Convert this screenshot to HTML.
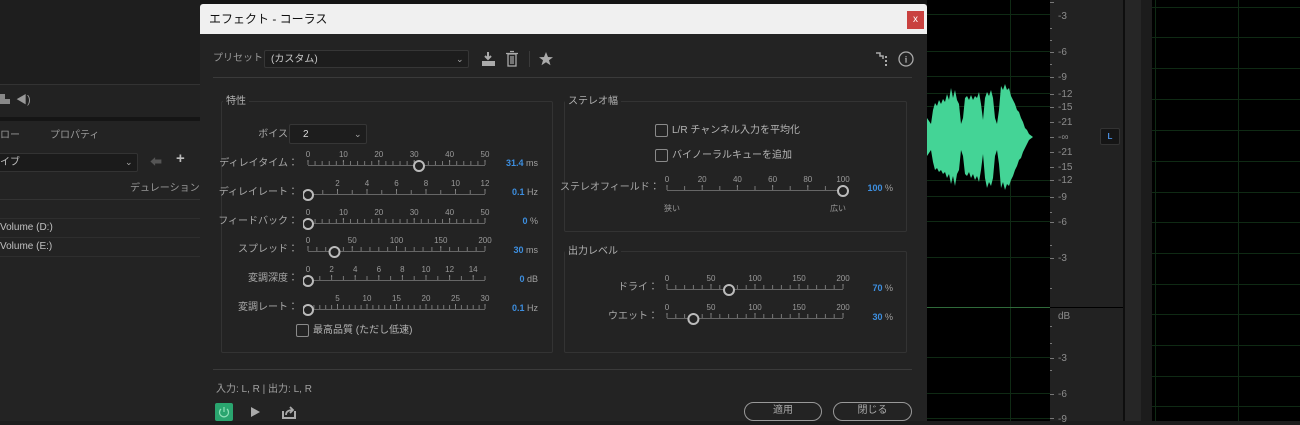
<!DOCTYPE html>
<html><head><meta charset="utf-8"><style>
*{margin:0;padding:0;box-sizing:border-box}
body{width:1300px;height:421px;overflow:hidden;background:#1d1d1d;font-family:"Liberation Sans","Noto Sans CJK JP",sans-serif;position:relative;color:#b8b8b8}
.a{position:absolute}
.t{position:absolute;font-size:10px;color:#b5b5b5;white-space:nowrap;line-height:12px}
.lbl{position:absolute;font-size:10px;color:#a8a8a8;text-align:right;white-space:nowrap;line-height:12px}
.val{position:absolute;font-size:9px;color:#a0a0a0;text-align:right;white-space:nowrap;line-height:12px}
.val b{color:#3d8fe0;font-weight:bold}
.cb{position:absolute;width:13px;height:13px;border:1.5px solid #8a8a8a;border-radius:2px}
.grp{position:absolute;border:1px solid #333;border-radius:2px}
.gl{position:absolute;font-size:10px;color:#b0b0b0;background:#232323;padding:0 3px;line-height:12px}
svg text{font-family:"Liberation Sans",sans-serif;font-size:8px;fill:#9a9a9a;text-anchor:middle}
.rl{position:absolute;left:1058px;font-size:10px;color:#8c8c8c;line-height:10px}
</style></head><body>
<!-- left panel -->
<div class="a" style="left:0;top:0;width:200px;height:84px;background:#1e1e1e"></div>
<div class="a" style="left:0;top:84px;width:200px;height:1px;background:#333"></div>
<div class="a" style="left:0;top:85px;width:200px;height:32px;background:#222"></div>
<div class="t" style="left:0;top:95px;color:#888">▙</div>
<div class="t" style="left:16px;top:94px;color:#999;font-size:11px">◀)</div>
<div class="a" style="left:0;top:117px;width:200px;height:4px;background:#151515"></div>
<div class="a" style="left:0;top:121px;width:200px;height:300px;background:#232323"></div>
<div class="t" style="left:0;top:130px;color:#999">ロー</div>
<div class="t" style="left:50px;top:130px;color:#999">プロパティ</div>
<div class="a" style="left:-2px;top:153px;width:140px;height:19px;background:#1b1b1b;border:1px solid #333;border-radius:2px"></div>
<div class="t" style="left:0;top:157px;color:#c0c0c0">イブ</div>
<div class="t" style="left:125px;top:156px;color:#aaa;font-size:9px">⌄</div>
<div class="t" style="left:150px;top:156px;color:#555;font-size:12px">⬅</div>
<div class="t" style="left:176px;top:153px;color:#bbb;font-size:15px;font-weight:bold">+</div>
<div class="t" style="left:130px;top:183px;color:#999">デュレーション</div>
<div class="a" style="left:0;top:199px;width:200px;height:1px;background:#333"></div>
<div class="a" style="left:0;top:218px;width:200px;height:1px;background:#2e2e2e"></div>
<div class="a" style="left:0;top:237px;width:200px;height:1px;background:#2e2e2e"></div>
<div class="a" style="left:0;top:256px;width:200px;height:1px;background:#2e2e2e"></div>
<div class="t" style="left:0;top:222px;color:#c0c0c0">Volume (D:)</div>
<div class="t" style="left:0;top:241px;color:#c0c0c0">Volume (E:)</div>

<!-- waveform area -->
<div class="a" style="left:927px;top:0;width:123px;height:421px;background:#000"></div>
<svg class="a" style="left:927px;top:0" width="123" height="421">
<g stroke="#0f2a14" stroke-width="1">
<line x1="0" y1="14.5" x2="123" y2="14.5"/><line x1="0" y1="51.5" x2="123" y2="51.5"/><line x1="0" y1="76.5" x2="123" y2="76.5"/><line x1="0" y1="93.5" x2="123" y2="93.5"/><line x1="0" y1="106.5" x2="123" y2="106.5"/><line x1="0" y1="180.5" x2="123" y2="180.5"/><line x1="0" y1="196.5" x2="123" y2="196.5"/><line x1="0" y1="221.5" x2="123" y2="221.5"/><line x1="0" y1="257.5" x2="123" y2="257.5"/><line x1="0" y1="357.5" x2="123" y2="357.5"/><line x1="0" y1="393.5" x2="123" y2="393.5"/><line x1="0" y1="418.5" x2="123" y2="418.5"/>
<line x1="83.5" y1="0" x2="83.5" y2="421"/></g>
<line x1="0" y1="307.5" x2="123" y2="307.5" stroke="#2f6a3a" stroke-width="1"/>
<path fill="#44d496" d="M0,118 L4,124 L6,110 L8,103 L10,106 L12,100 L14,104 L16,99 L18,102 L20,94 L22,100 L24,88 L26,98 L28,90 L30,100 L32,104 L34,124 L36,118 L38,98 L40,96 L42,100 L44,95 L46,100 L48,96 L50,98 L52,92 L54,104 L56,120 L58,98 L60,92 L62,96 L64,90 L66,98 L68,118 L70,124 L72,110 L74,86 L76,90 L78,84 L80,90 L82,88 L84,96 L86,100 L88,104 L90,110 L92,112 L94,118 L96,122 L98,128 L100,130 L102,134 L106,137 L102,140 L100,144 L98,148 L96,152 L94,158 L92,160 L90,166 L88,170 L86,176 L84,180 L82,186 L80,184 L78,190 L76,182 L74,188 L72,164 L70,150 L68,156 L66,178 L64,186 L62,182 L60,188 L58,178 L56,154 L54,170 L52,182 L50,176 L48,180 L46,174 L44,178 L42,172 L40,176 L38,174 L36,156 L34,150 L32,170 L30,174 L28,186 L26,176 L24,184 L22,174 L20,178 L18,172 L16,174 L14,170 L12,172 L10,168 L8,170 L6,162 L4,150 L0,156 Z"/>
</svg>
<!-- ruler -->
<div class="a" style="left:1050px;top:0;width:73px;height:421px;background:#222"></div>
<svg class="a" style="left:1050px;top:0" width="6" height="421"><g stroke="#777"><line x1="0" y1="2.5" x2="4" y2="2.5"/><line x1="0" y1="28.5" x2="2" y2="28.5"/><line x1="0" y1="40.5" x2="2" y2="40.5"/><line x1="0" y1="52.5" x2="4" y2="52.5"/><line x1="0" y1="64.5" x2="2" y2="64.5"/><line x1="0" y1="77.5" x2="4" y2="77.5"/><line x1="0" y1="94.5" x2="4" y2="94.5"/><line x1="0" y1="107.5" x2="4" y2="107.5"/><line x1="0" y1="122.5" x2="4" y2="122.5"/><line x1="0" y1="137.5" x2="4" y2="137.5"/><line x1="0" y1="152.5" x2="4" y2="152.5"/><line x1="0" y1="167.5" x2="4" y2="167.5"/><line x1="0" y1="180.5" x2="4" y2="180.5"/><line x1="0" y1="197.5" x2="4" y2="197.5"/><line x1="0" y1="212.5" x2="2" y2="212.5"/><line x1="0" y1="222.5" x2="4" y2="222.5"/><line x1="0" y1="245.5" x2="2" y2="245.5"/><line x1="0" y1="258.5" x2="4" y2="258.5"/><line x1="0" y1="288.5" x2="2" y2="288.5"/><line x1="0" y1="326.5" x2="2" y2="326.5"/><line x1="0" y1="343.5" x2="2" y2="343.5"/><line x1="0" y1="358.5" x2="4" y2="358.5"/><line x1="0" y1="370.5" x2="2" y2="370.5"/><line x1="0" y1="394.5" x2="4" y2="394.5"/><line x1="0" y1="418.5" x2="4" y2="418.5"/></g></svg>
<div class="a" style="left:1050px;top:307px;width:73px;height:1px;background:#000"></div>
<div class="a" style="left:1123px;top:0;width:2px;height:421px;background:#0e0e0e"></div>
<div class="a" style="left:1125px;top:0;width:27px;height:421px;background:#262626"></div>
<div class="a" style="left:1141px;top:0;width:11px;height:421px;background:#1c1c1c"></div>
<div class="rl" style="top:12px">-3</div><div class="rl" style="top:48px">-6</div><div class="rl" style="top:73px">-9</div><div class="rl" style="top:90px">-12</div><div class="rl" style="top:103px">-15</div><div class="rl" style="top:118px">-21</div><div class="rl" style="top:133px">-∞</div><div class="rl" style="top:148px">-21</div><div class="rl" style="top:163px">-15</div><div class="rl" style="top:176px">-12</div><div class="rl" style="top:193px">-9</div><div class="rl" style="top:218px">-6</div><div class="rl" style="top:254px">-3</div><div class="rl" style="top:312px">dB</div><div class="rl" style="top:354px">-3</div><div class="rl" style="top:390px">-6</div><div class="rl" style="top:415px">-9</div>
<div class="a" style="left:1100px;top:128px;width:20px;height:17px;background:#151515;border:1px solid #333;border-radius:2px;color:#4a8fe0;font-size:8px;text-align:center;line-height:15px;font-weight:bold">L</div>
<!-- far right grid -->
<svg class="a" style="left:1152px;top:0" width="148" height="421"><rect width="148" height="421" fill="#000"/>
<g stroke="#0f2a14"><line x1="3.5" y1="0" x2="3.5" y2="421"/><line x1="86.5" y1="0" x2="86.5" y2="421"/>
<line x1="0" y1="7.5" x2="148" y2="7.5"/><line x1="0" y1="37.5" x2="148" y2="37.5"/><line x1="0" y1="68.5" x2="148" y2="68.5"/><line x1="0" y1="99.5" x2="148" y2="99.5"/><line x1="0" y1="130.5" x2="148" y2="130.5"/><line x1="0" y1="161.5" x2="148" y2="161.5"/><line x1="0" y1="192.5" x2="148" y2="192.5"/><line x1="0" y1="222.5" x2="148" y2="222.5"/><line x1="0" y1="253.5" x2="148" y2="253.5"/><line x1="0" y1="284.5" x2="148" y2="284.5"/><line x1="0" y1="314.5" x2="148" y2="314.5"/><line x1="0" y1="345.5" x2="148" y2="345.5"/><line x1="0" y1="376.5" x2="148" y2="376.5"/><line x1="0" y1="406.5" x2="148" y2="406.5"/></g></svg>

<!-- dialog -->
<div class="a" style="left:200px;top:0;width:727px;height:4px;background:#141414"></div>
<div class="a" style="left:200px;top:4px;width:727px;height:30px;background:#f0f0f0;border-radius:3px 3px 0 0"></div>
<div class="t" style="left:209px;top:12px;color:#111;font-size:12px;line-height:14px">エフェクト - コーラス</div>
<div class="a" style="left:907px;top:11px;width:17px;height:18px;background:#c9413f;color:#fff;font-size:10px;text-align:center;line-height:17px">x</div>
<div class="a" style="left:200px;top:34px;width:727px;height:387px;background:#232323"></div>

<div class="lbl" style="left:213px;top:53px;color:#999">プリセット：</div>
<div class="a" style="left:264px;top:50px;width:205px;height:18px;background:#1d1d1d;border:1px solid #363636;border-radius:2px"></div>
<div class="t" style="left:271px;top:54px;color:#c8c8c8">(カスタム)</div>
<div class="t" style="left:456px;top:53px;color:#aaa;font-size:9px">⌄</div>
<svg class="a" style="left:481px;top:50px" width="75" height="18">
<path d="M7,2 v7 M4,6 l3,3 3,-3" stroke="#aaa" stroke-width="2" fill="none"/><rect x="1" y="11" width="13" height="5" fill="#aaa"/>
<rect x="27" y="4" width="8" height="12" stroke="#aaa" fill="none" stroke-width="1.3"/><path d="M25,3.5 h12 M29,1.5 h4 M30,6 v8 M32,6 v8" stroke="#aaa" stroke-width="1.2"/>
<line x1="48.5" y1="1" x2="48.5" y2="17" stroke="#3a3a3a"/>
<path d="M65,2 l2,5 5,0.3 -4,3 1.5,5 -4.5,-3 -4.5,3 1.5,-5 -4,-3 5,-0.3z" fill="#aaa"/></svg>
<svg class="a" style="left:875px;top:50px" width="40" height="18">
<path d="M1,3 h4 v3 h3 v3" stroke="#aaa" stroke-width="1.5" fill="none"/><rect x="10" y="6" width="2" height="2" fill="#aaa"/><rect x="10" y="10" width="2" height="2" fill="#aaa"/><rect x="10" y="14" width="2" height="2" fill="#aaa"/>
<circle cx="31" cy="9" r="7" stroke="#aaa" stroke-width="1.3" fill="none"/><text x="31" y="12.5" style="font-size:9px;fill:#aaa;font-weight:bold;font-family:'Liberation Serif',serif">i</text></svg>
<div class="a" style="left:213px;top:77px;width:699px;height:1px;background:#3a3a3a"></div>

<!-- groups -->
<div class="grp" style="left:221px;top:101px;width:332px;height:252px"></div><div class="gl" style="left:223px;top:96px">特性</div>
<div class="grp" style="left:564px;top:101px;width:343px;height:131px"></div><div class="gl" style="left:565px;top:96px">ステレオ幅</div>
<div class="grp" style="left:564px;top:251px;width:343px;height:102px"></div><div class="gl" style="left:565px;top:246px">出力レベル</div>

<div class="lbl" style="left:230px;top:129px;width:68px">ボイス：</div>
<div class="a" style="left:289px;top:124px;width:78px;height:20px;background:#1d1d1d;border:1px solid #363636;border-radius:2px"></div>
<div class="t" style="left:303px;top:129px;color:#ddd">2</div>
<div class="t" style="left:354px;top:128px;color:#aaa;font-size:9px">⌄</div>

<!-- sliders left -->
<div class="lbl" style="left:200px;top:158px;width:98px">ディレイタイム：</div>
<svg class="a" style="left:303px;top:145px" width="190" height="30"><text x="5" y="12">0</text><text x="40.4" y="12">10</text><text x="75.8" y="12">20</text><text x="111.2" y="12">30</text><text x="146.6" y="12">40</text><text x="182" y="12">50</text>
<line x1="5" y1="20.5" x2="182" y2="20.5" stroke="#666"/><line x1="5" y1="18" x2="183" y2="18" stroke="#777" stroke-width="4" stroke-dasharray="1 6.08" transform="translate(-0.5,0)"/><line x1="5" y1="16" x2="183" y2="16" stroke="#888" stroke-width="2" stroke-dasharray="1 34.4" transform="translate(-0.5,0)"/>
<circle cx="116" cy="21" r="5" fill="#232323" stroke="#bbb" stroke-width="2"/></svg>
<div class="val" style="left:480px;top:157px;width:58px"><b>31.4</b> ms</div>

<div class="lbl" style="left:200px;top:187px;width:98px">ディレイレート：</div>
<svg class="a" style="left:303px;top:174px" width="190" height="30"><text x="34.5" y="12">2</text><text x="64" y="12">4</text><text x="93.5" y="12">6</text><text x="123" y="12">8</text><text x="152.5" y="12">10</text><text x="182" y="12">12</text>
<line x1="5" y1="20.5" x2="182" y2="20.5" stroke="#666"/><line x1="5" y1="18" x2="183" y2="18" stroke="#777" stroke-width="4" stroke-dasharray="1 13.75" transform="translate(-0.5,0)"/><line x1="5" y1="16" x2="183" y2="16" stroke="#888" stroke-width="2" stroke-dasharray="1 28.5" transform="translate(-0.5,0)"/>
<circle cx="5" cy="21" r="5" fill="#232323" stroke="#bbb" stroke-width="2"/></svg>
<div class="val" style="left:480px;top:186px;width:58px"><b>0.1</b> Hz</div>

<div class="lbl" style="left:200px;top:216px;width:98px">フィードバック：</div>
<svg class="a" style="left:303px;top:203px" width="190" height="30"><text x="5" y="12">0</text><text x="40.4" y="12">10</text><text x="75.8" y="12">20</text><text x="111.2" y="12">30</text><text x="146.6" y="12">40</text><text x="182" y="12">50</text>
<line x1="5" y1="20.5" x2="182" y2="20.5" stroke="#666"/><line x1="5" y1="18" x2="183" y2="18" stroke="#777" stroke-width="4" stroke-dasharray="1 6.08" transform="translate(-0.5,0)"/><line x1="5" y1="16" x2="183" y2="16" stroke="#888" stroke-width="2" stroke-dasharray="1 34.4" transform="translate(-0.5,0)"/>
<circle cx="5" cy="21" r="5" fill="#232323" stroke="#bbb" stroke-width="2"/></svg>
<div class="val" style="left:480px;top:215px;width:58px"><b>0</b> %</div>

<div class="lbl" style="left:200px;top:244px;width:98px">スプレッド：</div>
<svg class="a" style="left:303px;top:231px" width="190" height="30"><text x="5" y="12">0</text><text x="49.25" y="12">50</text><text x="93.5" y="12">100</text><text x="137.75" y="12">150</text><text x="182" y="12">200</text>
<line x1="5" y1="20.5" x2="182" y2="20.5" stroke="#666"/><line x1="5" y1="18" x2="183" y2="18" stroke="#777" stroke-width="4" stroke-dasharray="1 7.85" transform="translate(-0.5,0)"/><line x1="5" y1="16" x2="183" y2="16" stroke="#888" stroke-width="2" stroke-dasharray="1 43.25" transform="translate(-0.5,0)"/>
<circle cx="31.5" cy="21" r="5" fill="#232323" stroke="#bbb" stroke-width="2"/></svg>
<div class="val" style="left:480px;top:244px;width:58px"><b>30</b> ms</div>

<div class="lbl" style="left:200px;top:273px;width:98px">変調深度：</div>
<svg class="a" style="left:303px;top:260px" width="190" height="30"><text x="5" y="12">0</text><text x="28.6" y="12">2</text><text x="52.2" y="12">4</text><text x="75.8" y="12">6</text><text x="99.4" y="12">8</text><text x="123" y="12">10</text><text x="146.6" y="12">12</text><text x="170.2" y="12">14</text>
<line x1="5" y1="20.5" x2="182" y2="20.5" stroke="#666"/><line x1="5" y1="18" x2="183" y2="18" stroke="#777" stroke-width="4" stroke-dasharray="1 10.8" transform="translate(-0.5,0)"/><line x1="5" y1="16" x2="172" y2="16" stroke="#888" stroke-width="2" stroke-dasharray="1 22.6" transform="translate(-0.5,0)"/>
<circle cx="5" cy="21" r="5" fill="#232323" stroke="#bbb" stroke-width="2"/></svg>
<div class="val" style="left:480px;top:273px;width:58px"><b>0</b> dB</div>

<div class="lbl" style="left:200px;top:302px;width:98px">変調レート：</div>
<svg class="a" style="left:303px;top:289px" width="190" height="30"><text x="34.5" y="12">5</text><text x="64" y="12">10</text><text x="93.5" y="12">15</text><text x="123" y="12">20</text><text x="152.5" y="12">25</text><text x="182" y="12">30</text>
<line x1="5" y1="20.5" x2="182" y2="20.5" stroke="#666"/><line x1="5" y1="18" x2="183" y2="18" stroke="#777" stroke-width="4" stroke-dasharray="1 4.9" transform="translate(-0.5,0)"/><line x1="5" y1="16" x2="183" y2="16" stroke="#888" stroke-width="2" stroke-dasharray="1 28.5" transform="translate(-0.5,0)"/>
<circle cx="5" cy="21" r="5" fill="#232323" stroke="#bbb" stroke-width="2"/></svg>
<div class="val" style="left:480px;top:302px;width:58px"><b>0.1</b> Hz</div>

<div class="cb" style="left:296px;top:324px"></div>
<div class="t" style="left:313px;top:325px;color:#b5b5b5">最高品質 (ただし低速)</div>

<!-- stereo -->
<div class="cb" style="left:655px;top:124px"></div><div class="t" style="left:672px;top:125px">L/R チャンネル入力を平均化</div>
<div class="cb" style="left:655px;top:149px"></div><div class="t" style="left:672px;top:150px">バイノーラルキューを追加</div>
<div class="lbl" style="left:560px;top:182px;width:98px">ステレオフィールド：</div>
<svg class="a" style="left:662px;top:170px" width="190" height="30"><text x="5" y="12">0</text><text x="40.2" y="12">20</text><text x="75.4" y="12">40</text><text x="110.6" y="12">60</text><text x="145.8" y="12">80</text><text x="181" y="12">100</text>
<line x1="5" y1="20.5" x2="181" y2="20.5" stroke="#666"/><line x1="5" y1="18" x2="182" y2="18" stroke="#777" stroke-width="4" stroke-dasharray="1 16.6" transform="translate(-0.5,0)"/><line x1="5" y1="16" x2="182" y2="16" stroke="#888" stroke-width="2" stroke-dasharray="1 34.2" transform="translate(-0.5,0)"/>
<circle cx="181" cy="21" r="5" fill="#232323" stroke="#bbb" stroke-width="2"/></svg>
<div class="val" style="left:835px;top:182px;width:58px"><b>100</b> %</div>
<div class="t" style="left:664px;top:203px;font-size:8px;color:#999">狭い</div>
<div class="t" style="left:830px;top:203px;font-size:8px;color:#999">広い</div>

<!-- output -->
<div class="lbl" style="left:560px;top:282px;width:98px">ドライ：</div>
<svg class="a" style="left:662px;top:269px" width="190" height="30"><text x="5" y="12">0</text><text x="49" y="12">50</text><text x="93" y="12">100</text><text x="137" y="12">150</text><text x="181" y="12">200</text>
<line x1="5" y1="20.5" x2="181" y2="20.5" stroke="#666"/><line x1="5" y1="18" x2="182" y2="18" stroke="#777" stroke-width="4" stroke-dasharray="1 7.8" transform="translate(-0.5,0)"/><line x1="5" y1="16" x2="182" y2="16" stroke="#888" stroke-width="2" stroke-dasharray="1 43" transform="translate(-0.5,0)"/>
<circle cx="67" cy="21" r="5" fill="#232323" stroke="#bbb" stroke-width="2"/></svg>
<div class="val" style="left:835px;top:282px;width:58px"><b>70</b> %</div>
<div class="lbl" style="left:560px;top:311px;width:98px">ウエット：</div>
<svg class="a" style="left:662px;top:298px" width="190" height="30"><text x="5" y="12">0</text><text x="49" y="12">50</text><text x="93" y="12">100</text><text x="137" y="12">150</text><text x="181" y="12">200</text>
<line x1="5" y1="20.5" x2="181" y2="20.5" stroke="#666"/><line x1="5" y1="18" x2="182" y2="18" stroke="#777" stroke-width="4" stroke-dasharray="1 7.8" transform="translate(-0.5,0)"/><line x1="5" y1="16" x2="182" y2="16" stroke="#888" stroke-width="2" stroke-dasharray="1 43" transform="translate(-0.5,0)"/>
<circle cx="31.4" cy="21" r="5" fill="#232323" stroke="#bbb" stroke-width="2"/></svg>
<div class="val" style="left:835px;top:311px;width:58px"><b>30</b> %</div>

<!-- footer -->
<div class="a" style="left:213px;top:369px;width:699px;height:1px;background:#3a3a3a"></div>
<div class="t" style="left:216px;top:384px;color:#a0a0a0">入力: L, R | 出力: L, R</div>
<div class="a" style="left:215px;top:403px;width:18px;height:18px;background:#2aa56f;border-radius:2px"></div>
<svg class="a" style="left:215px;top:403px" width="18" height="18"><path d="M6,6 A4.5,4.5 0 1 0 12,6" stroke="#8fe0b8" stroke-width="1.2" fill="none"/><line x1="9" y1="4" x2="9" y2="9" stroke="#8fe0b8" stroke-width="1.2"/></svg>
<svg class="a" style="left:250px;top:405px" width="50" height="16"><path d="M1,2 L10,7 L1,12 Z" fill="#aaa"/><path d="M33,6 v7 h12 v-7" stroke="#aaa" stroke-width="2" fill="none"/><path d="M36,10 c0,-4 3,-5 7,-5 M40,2 l3,3 -3,3" stroke="#aaa" stroke-width="1.8" fill="none"/></svg>
<div class="a" style="left:744px;top:402px;width:78px;height:19px;border:1.5px solid #999;border-radius:10px;color:#aaa;font-size:10px;text-align:center;line-height:16px">適用</div>
<div class="a" style="left:833px;top:402px;width:79px;height:19px;border:1.5px solid #999;border-radius:10px;color:#aaa;font-size:10px;text-align:center;line-height:16px">閉じる</div>
</body></html>
